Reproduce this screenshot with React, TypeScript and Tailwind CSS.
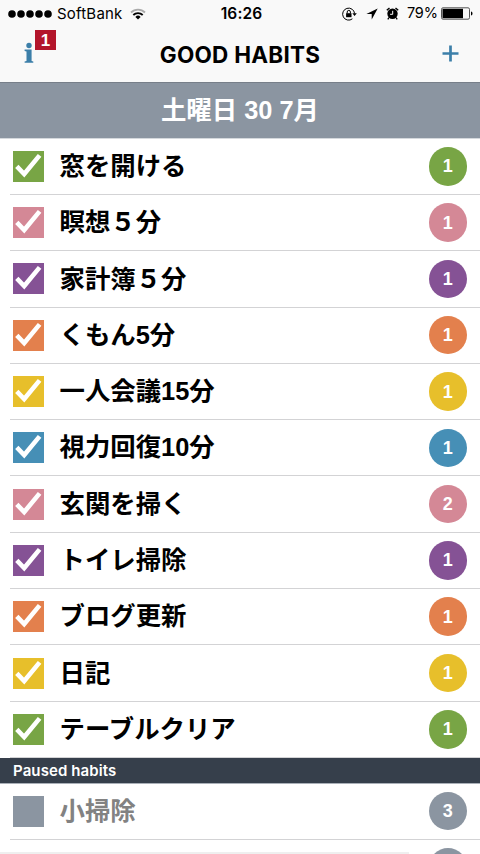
import React from 'react';

interface Habit {
  name: string;
  count?: number;
  color: string;
}

const habits: Habit[] = [
  { name: '窓を開ける', count: 1, color: 'bg-[#78a545]' },
  { name: '瞑想５分', count: 1, color: 'bg-[#d48896]' },
  { name: '家計簿５分', count: 1, color: 'bg-[#855295]' },
  { name: 'くもん5分', count: 1, color: 'bg-[#e3804d]' },
  { name: '一人会議15分', count: 1, color: 'bg-[#e7bf2b]' },
  { name: '視力回復10分', count: 1, color: 'bg-[#468fb6]' },
  { name: '玄関を掃く', count: 2, color: 'bg-[#d48896]' },
  { name: 'トイレ掃除', count: 1, color: 'bg-[#855295]' },
  { name: 'ブログ更新', count: 1, color: 'bg-[#e3804d]' },
  { name: '日記', count: 1, color: 'bg-[#e7bf2b]' },
  { name: 'テーブルクリア', count: 1, color: 'bg-[#78a545]' },
];

const pausedHabits: Habit[] = [
  { name: '小掃除', count: 3, color: 'bg-[#8b95a1]' },
  { name: '', color: 'bg-[#8b95a1]' },
];

function StatusBar() {
  return (
    <div className="grid h-[27px] grid-cols-[1fr_auto_1fr] items-center pl-2 pr-[7px] font-['Inter','Liberation_Sans',sans-serif] text-[14.5px] leading-none text-black">
      <div className="flex items-center">
        <svg width="44" height="8" viewBox="0 0 44 8">
          {[4, 13, 22, 31, 40].map((cx) => (
            <circle key={cx} cx={cx} cy="4" r="3.8" />
          ))}
        </svg>
        <span className="ml-[5px] w-[65px] whitespace-nowrap text-[15px] tracking-[0.2px]">SoftBank</span>
        <svg className="ml-2" width="16" height="12" viewBox="0 0 16 12" fill="none" stroke="black">
          <path d="M1 4.5a10 10 0 0 1 14 0" stroke="#aaa" strokeWidth="1.8" />
          <path d="M3.3 7a6.8 6.8 0 0 1 9.4 0" strokeWidth="1.9" />
          <path d="M8 11.5L5.4 8.9a3.7 3.7 0 0 1 5.2 0z" fill="black" stroke="none" />
        </svg>
      </div>
      <span className="relative left-[1px] text-[15.5px] font-semibold tracking-[0.15px]">16:26</span>
      <div className="flex items-center justify-end">
        {/* 画面回転ロック */}
        <svg className="mr-px" width="15" height="14" viewBox="0 0 15 14" fill="none" stroke="black">
          <path d="M10.4 11.8A6 6 0 1 1 12.6 6.5" strokeWidth="1" />
          <path d="M10.3 6.2h4.5l-2.2 2.7z" fill="black" stroke="none" />
          <rect x="4.1" y="6.2" width="5.4" height="4" fill="black" stroke="none" />
          <path d="M5.2 6.3V5a1.6 1.6 0 0 1 3.2 0v1.3" />
        </svg>
        <svg className="ml-2" width="12" height="12" viewBox="0 0 12 12">
          <path d="M11.7.4L.4 6.1h5.3v5.4z" />
        </svg>
        {/* アラーム */}
        <svg className="ml-2" width="13" height="13" viewBox="0 0 13 13" fill="none" stroke="black">
          <circle cx="6.5" cy="6.8" r="5.2" fill="black" stroke="none" />
          <path d="M.8 3.3L3.5.9M12.2 3.3L9.5.9" strokeWidth="1.4" />
          <path d="M3 10.5l-1.2 1.8M10 10.5l1.2 1.8" strokeWidth="1.3" />
          <path d="M6.7 3.8v3.5H4.1" stroke="white" strokeWidth="1" />
        </svg>
        <span className="ml-[8px] w-[30px] whitespace-nowrap tracking-[-0.2px]">79%</span>
        <svg className="ml-[4px]" width="32" height="13" viewBox="0 0 32 13">
          <rect x=".5" y=".8" width="28" height="11.4" rx="1.5" fill="none" stroke="#555" />
          <rect x="1.5" y="1.8" width="20.5" height="9.4" />
          <path d="M30 4.5c2 .5 2 3.5 0 4z" />
        </svg>
      </div>
    </div>
  );
}

function NavBar() {
  return (
    <div className="grid h-[55px] grid-cols-[60px_1fr_60px] items-center">
      <div className="relative h-full">
        <svg className="absolute left-6 top-[15px]" width="11" height="22" viewBox="0 0 11 22" fill="#3c7fa9">
          <circle cx="5" cy="3.5" r="2.7" />
          <path d="M.6 7.6h7v11.3l1.7.5v1.4H.6v-1.4l1.9-.5V9.6L.6 9z" />
        </svg>
        <span className="absolute left-[35px] top-[3px] flex h-5 w-[21px] items-center justify-center bg-[#b3152b] font-['Liberation_Sans',sans-serif] text-[17px] font-bold leading-none text-white">
          1
        </span>
      </div>
      <h1 className="whitespace-nowrap pt-[2px] text-center font-['Inter','Liberation_Sans',sans-serif] text-[22.5px] font-bold leading-none tracking-[0.25px] text-black">
        GOOD HABITS
      </h1>
      <svg className="relative -top-px ml-[22px]" width="17" height="17" viewBox="0 0 17 17" fill="none" stroke="#3c7fa9" strokeWidth="2.7">
        <path d="M8.5.5v16M.5 8.5h16" />
      </svg>
    </div>
  );
}

function HabitRow({ habit, paused = false }: { habit: Habit; paused?: boolean }) {
  return (
    <div className="flex h-[56.3px] shrink-0 flex-col">
      <div className="flex flex-1 items-center pl-[13px] pr-[13px]">
        <div className={`h-[31px] w-[31px] shrink-0 ${habit.color}`}>
          {!paused && (
            <svg width="31" height="31" viewBox="0 0 31 31" fill="none" stroke="white" strokeWidth="4.6">
              <path d="M3.8 15.4l7.4 7.6L26.6 4.4" />
            </svg>
          )}
        </div>
        <span
          className={`ml-[15.5px] flex-1 whitespace-nowrap pt-[0.6px] text-[25.4px] font-bold leading-none ${paused ? 'text-[#828282]' : 'text-black'}`}
        >
          {habit.name}
        </span>
        <span
          className={`flex h-[38.5px] w-[38.5px] items-center justify-center rounded-full text-[18px] font-bold leading-none text-white ${habit.color}`}
        >
          {habit.count}
        </span>
      </div>
      <div className="ml-[10px] h-px bg-[#d3d3d5]" />
    </div>
  );
}

export default function App() {
  return (
    <div className="relative flex h-[854px] w-[480px] flex-col overflow-hidden bg-white font-['Liberation_Sans','Noto_Sans_CJK_JP',sans-serif]">
      <header className="h-[82px] shrink-0 bg-[#f9f9f9]">
        <StatusBar />
        <NavBar />
      </header>
      <div className="flex h-[56.7px] shrink-0 items-center justify-center border-b border-t border-b-[#d5d9dd] border-t-[#777f89] bg-[#8b95a1] pt-px text-[25.4px] font-bold leading-none text-white">
        土曜日 30 7月
      </div>
      {habits.map((habit) => (
        <HabitRow key={habit.name} habit={habit} />
      ))}
      <div className="flex h-[25.6px] shrink-0 items-center border-b border-[#aab0b8] bg-[#363f4b] pl-[13px] pt-px font-['Inter','Liberation_Sans',sans-serif] text-[15px] font-semibold leading-none tracking-[0.1px] text-white">
        Paused habits
      </div>
      {pausedHabits.map((habit) => (
        <HabitRow key={habit.name} habit={habit} paused />
      ))}
      <div className="absolute bottom-0 left-0 h-[2px] w-[409px] bg-[#efefef]" />
    </div>
  );
}
